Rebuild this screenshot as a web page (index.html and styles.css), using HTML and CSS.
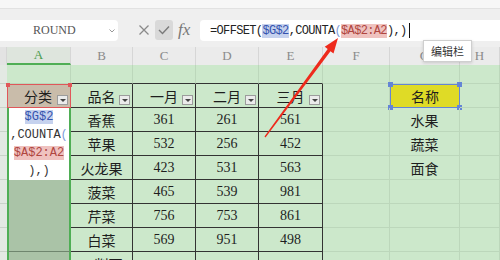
FILE: index.html
```html
<!DOCTYPE html>
<html lang="zh-CN">
<head>
    <meta charset="UTF-8">
    <meta name="viewport" content="width=device-width, initial-scale=1.0">
    <title>OFFSET 编辑栏</title>
    <link rel="stylesheet" href="styles.css">
</head>
<body>
    <!-- 顶部工具条 -->
    <div class="top"></div>

    <!-- 名称框 + 编辑栏 -->
    <div class="fbar">
        <div class="namebox">
            <span>ROUND</span>
            <svg class="caret" width="6" height="4" viewBox="0 0 6 4"><path d="M0.5 0.5 3 3 5.5 0.5" fill="none" stroke="#999" stroke-width="1"/></svg>
        </div>
        <span class="ico cancel">
            <svg width="12" height="12" viewBox="0 0 12 12"><path d="M1.5 1.5 10.5 10.5M10.5 1.5 1.5 10.5" stroke="#8a8a8a" stroke-width="1.3"/></svg>
        </span>
        <span class="ico ok">
            <svg width="12" height="10" viewBox="0 0 12 10"><path d="M1 5 4.5 8.5 11 1.5" fill="none" stroke="#7a7a7a" stroke-width="1.4"/></svg>
        </span>
        <span class="fx">fx</span>
        <div class="formula">=OFFSET(<span class="ref-g">$G$2</span>,COUNTA<span class="paren">(</span><span class="ref-a">$A$2:A2</span>),)<span class="cursor"></span></div>
    </div>

    <!-- 工作表 -->
    <div class="sheet">
        <div class="ch corner"></div>
        <div class="ch active">A</div>
        <div class="ch">B</div>
        <div class="ch">C</div>
        <div class="ch">D</div>
        <div class="ch">E</div>
        <div class="ch">F</div>
        <div class="ch">G</div>
        <div class="ch">H</div>

        <div class="rh"></div>
        <div class="c"></div>
        <div class="c tt"></div>
        <div class="c tt"></div>
        <div class="c tt"></div>
        <div class="c tt"></div>
        <div class="c"></div>
        <div class="c"></div>
        <div class="c"></div>

        <div class="rh"></div>
        <div class="c cat-head">分类<span class="fb"></span></div>
        <div class="c t">品名<span class="fb"></span></div>
        <div class="c t">一月<span class="fb"></span></div>
        <div class="c t">二月<span class="fb"></span></div>
        <div class="c t">三月<span class="fb"></span></div>
        <div class="c"></div>
        <div class="c name-head">名称</div>
        <div class="c"></div>

        <div class="rh"></div>
        <div class="c edit">
            <span class="ref-g">$G$2</span><br>,COUNTA<span class="paren">(</span><br><span class="ref-a">$A$2:A2</span><br>),)
        </div>
        <div class="c t">香蕉</div>
        <div class="c t num">361</div>
        <div class="c t num">261</div>
        <div class="c t num">561</div>
        <div class="c"></div>
        <div class="c">水果</div>
        <div class="c"></div>

        <div class="rh"></div>
        <div class="c t">苹果</div>
        <div class="c t num">532</div>
        <div class="c t num">256</div>
        <div class="c t num">452</div>
        <div class="c"></div>
        <div class="c">蔬菜</div>
        <div class="c"></div>

        <div class="rh"></div>
        <div class="c t">火龙果</div>
        <div class="c t num">423</div>
        <div class="c t num">531</div>
        <div class="c t num">563</div>
        <div class="c"></div>
        <div class="c">面食</div>
        <div class="c"></div>

        <div class="rh"></div>
        <div class="c sel sel-merge"></div>
        <div class="c t">菠菜</div>
        <div class="c t num">465</div>
        <div class="c t num">539</div>
        <div class="c t num">981</div>
        <div class="c"></div>
        <div class="c"></div>
        <div class="c"></div>

        <div class="rh"></div>
        <div class="c t">芹菜</div>
        <div class="c t num">756</div>
        <div class="c t num">753</div>
        <div class="c t num">861</div>
        <div class="c"></div>
        <div class="c"></div>
        <div class="c"></div>

        <div class="rh"></div>
        <div class="c t">白菜</div>
        <div class="c t num">569</div>
        <div class="c t num">951</div>
        <div class="c t num">498</div>
        <div class="c"></div>
        <div class="c"></div>
        <div class="c"></div>

        <div class="rh"></div>
        <div class="c sel"></div>
        <div class="c t">刀削面</div>
        <div class="c t num"></div>
        <div class="c t num"></div>
        <div class="c t num"></div>
        <div class="c"></div>
        <div class="c"></div>
        <div class="c"></div>
    </div>

    <!-- 提示框 -->
    <div class="tip">编辑栏</div>

    <!-- 红色箭头 -->
    <svg class="arrow" width="500" height="260" viewBox="0 0 500 260">
        <polygon points="265.5,137.4 330.5,51.2 333.5,53.4 338,38 324.7,46.8 327.7,49 264.5,136.6" fill="#ee2a1c"/>
    </svg>
</body>
</html>
```

FILE: styles.css
```css
body {
    margin: 0;
    width: 500px;
    height: 260px;
    overflow: hidden;
    position: relative;
    background-color: #f1f1f1;
    font-family: "Noto Sans CJK SC", sans-serif;
    color: #1e1e1e;
}

.top {
    height: 8px;
    background-color: #f7f7f7;
    border-bottom: 1px solid #e2e2e2;
}

/* 编辑栏 */
.fbar {
    height: 38px;
    box-sizing: border-box;
    padding-top: 11px;
    display: flex;
    align-items: flex-start;
    background-color: #efefef;
}

.namebox {
    width: 118px;
    height: 21px;
    background: #fff;
    border-radius: 0 4px 4px 0;
    display: flex;
    align-items: center;
    justify-content: space-between;
    box-sizing: border-box;
    padding: 0 3px 0 33px;
    font-family: "Liberation Serif", serif;
    font-size: 12px;
    color: #555;
}

.caret {
    margin-top: 1px;
}

.ico {
    height: 20px;
    display: flex;
    align-items: center;
    justify-content: center;
}

.cancel {
    width: 14px;
    margin-left: 19px;
}

.ok {
    width: 18px;
    margin-left: 4px;
    background: #d9d9d9;
    border-radius: 3px;
}

.fx {
    width: 17px;
    margin-left: 5px;
    line-height: 20px;
    font-family: "Liberation Serif", serif;
    font-style: italic;
    font-size: 17px;
    color: #777;
}

.formula {
    flex: 1;
    margin-left: 5px;
    height: 21px;
    background: #fff;
    border-radius: 4px 0 0 4px;
    box-sizing: border-box;
    padding-left: 10px;
    display: flex;
    align-items: center;
    font-family: "Liberation Mono", monospace;
    font-size: 12px;
    letter-spacing: -0.65px;
    color: #222;
    white-space: nowrap;
}

.ref-g {
    background: #c6d2ee;
    color: #3452ae;
}

.ref-a {
    background: #efc2bf;
    color: #b0463f;
}

.paren {
    color: #7d9bd8;
}

.cursor {
    width: 1px;
    height: 15px;
    margin-left: 2px;
    background: #111;
}

/* 工作表 */
.sheet {
    display: grid;
    grid-template-columns: 7px 64px 62px 63px 63px 64px 67px 70px 1fr;
    grid-template-rows: 18px 19px repeat(8, 24px);
    background-color: #cce8cb;
}

.ch {
    background: #ebebeb;
    border-right: 1px solid #d6d6d6;
    display: flex;
    align-items: center;
    justify-content: center;
    font-family: "Liberation Serif", serif;
    font-size: 13px;
    color: #8a8a8a;
}

.ch.corner {
    background: #e3e3e3;
}

.ch.active {
    background: #dee5dd;
    color: #4a9b4c;
    box-sizing: border-box;
    border-bottom: 2px solid #4fae55;
}

.rh {
    background: #e3e9e3;
    border-bottom: 1px solid #c9d3c9;
}

.c {
    position: relative;
    box-sizing: border-box;
    border-right: 1px solid #bcd7bb;
    border-bottom: 1px solid #bcd7bb;
    display: flex;
    align-items: center;
    justify-content: center;
    font-size: 14px;
    white-space: nowrap;
}

.c.tt {
    border-bottom: 1px solid #333;
}

.c.t {
    border-right: 1px solid #333;
    border-bottom: 1px solid #333;
}

.num {
    font-family: "Liberation Serif", serif;
    font-size: 14px;
}

.fb {
    position: absolute;
    right: 2px;
    bottom: 2px;
    width: 11px;
    height: 10px;
    box-sizing: border-box;
    border: 1px solid #9c9c9c;
    background: #ebebeb;
}

.fb::after {
    content: "";
    position: absolute;
    left: 2px;
    top: 3px;
    border-left: 3px solid transparent;
    border-right: 3px solid transparent;
    border-top: 3px solid #444;
}

/* A2: 被引用的单元格 */
.cat-head {
    background: #c9bcaa;
    border: 1px solid #e0575a;
    padding-right: 2px;
}

.cat-head::before,
.cat-head::after {
    content: "";
    position: absolute;
    top: -2px;
    width: 4px;
    height: 4px;
    background: #e0575a;
}

.cat-head::before {
    left: -2px;
}

.cat-head::after {
    right: -2px;
}

/* 编辑中的合并单元格 */
.edit {
    grid-row: span 3;
    background: #fff;
    border-left: 2px solid #4fae55;
    border-right: 2px solid #4fae55;
    border-bottom: none;
    display: block;
    text-align: center;
    font-family: "Liberation Mono", monospace;
    font-size: 12px;
    line-height: 18px;
    color: #333;
}

.sel {
    background: #aac3a7;
    border-left: 2px solid #4fae55;
    border-right: 2px solid #4fae55;
    border-bottom: 1px solid #6f866e;
}

.sel-merge {
    grid-row: span 3;
}

/* G2 */
.name-head {
    background: #dfdb26;
    border: 1px solid #6485d6;
}

.name-head::before,
.name-head::after {
    content: "";
    position: absolute;
    top: -3px;
    width: 5px;
    height: 5px;
    background: #6485d6;
    box-shadow: 0 23px 0 #6485d6;
}

.name-head::before {
    left: -3px;
}

.name-head::after {
    right: -3px;
}

.tip {
    position: absolute;
    left: 423px;
    top: 40px;
    width: 49px;
    height: 22px;
    box-sizing: border-box;
    background: #fff;
    border: 1px solid #cfcfcf;
    box-shadow: 0 1px 3px rgba(0, 0, 0, 0.15);
    font-size: 11px;
    line-height: 20px;
    text-align: center;
    color: #333;
}

.arrow {
    position: absolute;
    left: 0;
    top: 0;
    pointer-events: none;
}
```
